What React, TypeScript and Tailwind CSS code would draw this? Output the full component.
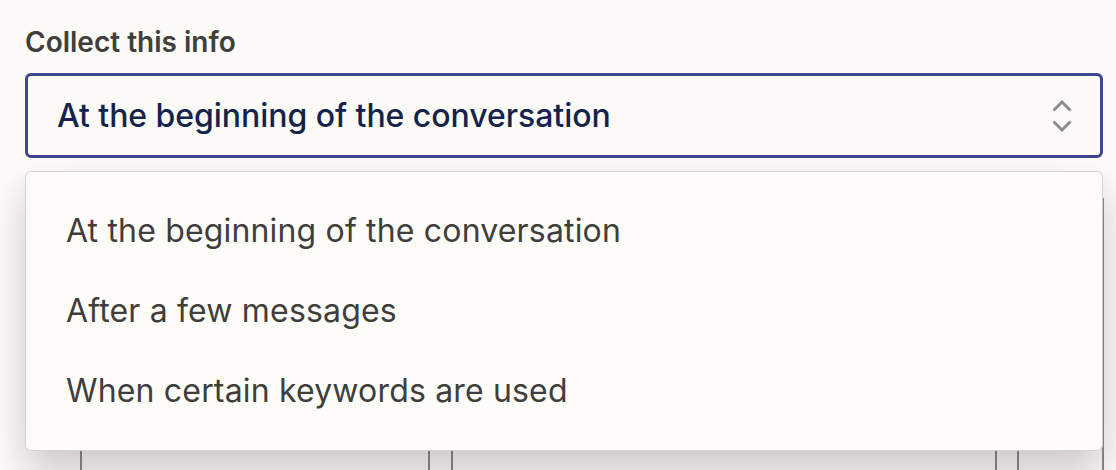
import React from "react";

const items = [
  "At the beginning of the conversation",
  "After a few messages",
  "When certain keywords are used",
];

function UpDown() {
  return (
    <svg width="20" height="32" viewBox="0 0 20 32" fill="none" className="shrink-0">
      <path d="M1.5 10.5 L10 2 L18.5 10.5" stroke="#8e8c88" strokeWidth="3" strokeLinejoin="miter" />
      <path d="M1.5 21.5 L10 30 L18.5 21.5" stroke="#8e8c88" strokeWidth="3" strokeLinejoin="miter" />
    </svg>
  );
}

export default function App() {
  return (
    <div className="h-[470px] w-full overflow-hidden bg-[#fcfbf8] font-['Inter',sans-serif]">
      <div className="px-[25px] pt-[25px] pr-[13px]">
        <div className="text-[28px] leading-[34px] font-semibold text-[#403f3d]">Collect this info</div>
        <div className="mt-[14px] h-[85px] rounded-[6px] border-[3px] border-[#3d4691] flex items-center justify-between pl-[29px] pr-[28px]">
          <span className="text-[32px] leading-[40px] font-medium tracking-[-0.05px] text-[#14234b]">
            At the beginning of the conversation
          </span>
          <UpDown />
        </div>
      </div>
      <div className="relative">
        <div className="flex pt-[40px] pl-[80px]">
          <div className="h-[400px] w-[350px] border-x-2 border-[#8c8b88]" />
          <div className="ml-[21px] h-[400px] w-[546px] border-x-2 border-[#8c8b88]" />
          <div className="ml-[20px] h-[400px] w-[87px] border-x-2 border-[#8c8b88]" />
        </div>
        <div className="absolute top-[13px] left-[25px] right-[13px] z-10 rounded-[6px] border border-[#d5d3cf] bg-[#fdfcf9] py-[19px] shadow-[0_20px_40px_rgba(0,0,0,0.2)]">
          {items.map((t) => (
            <div
              key={t}
              className="h-[80px] flex items-center pl-[40px] text-[32px] leading-[40px] tracking-[0.17px] text-[#3f3e3c]"
            >
              {t}
            </div>
          ))}
        </div>
      </div>
    </div>
  );
}
